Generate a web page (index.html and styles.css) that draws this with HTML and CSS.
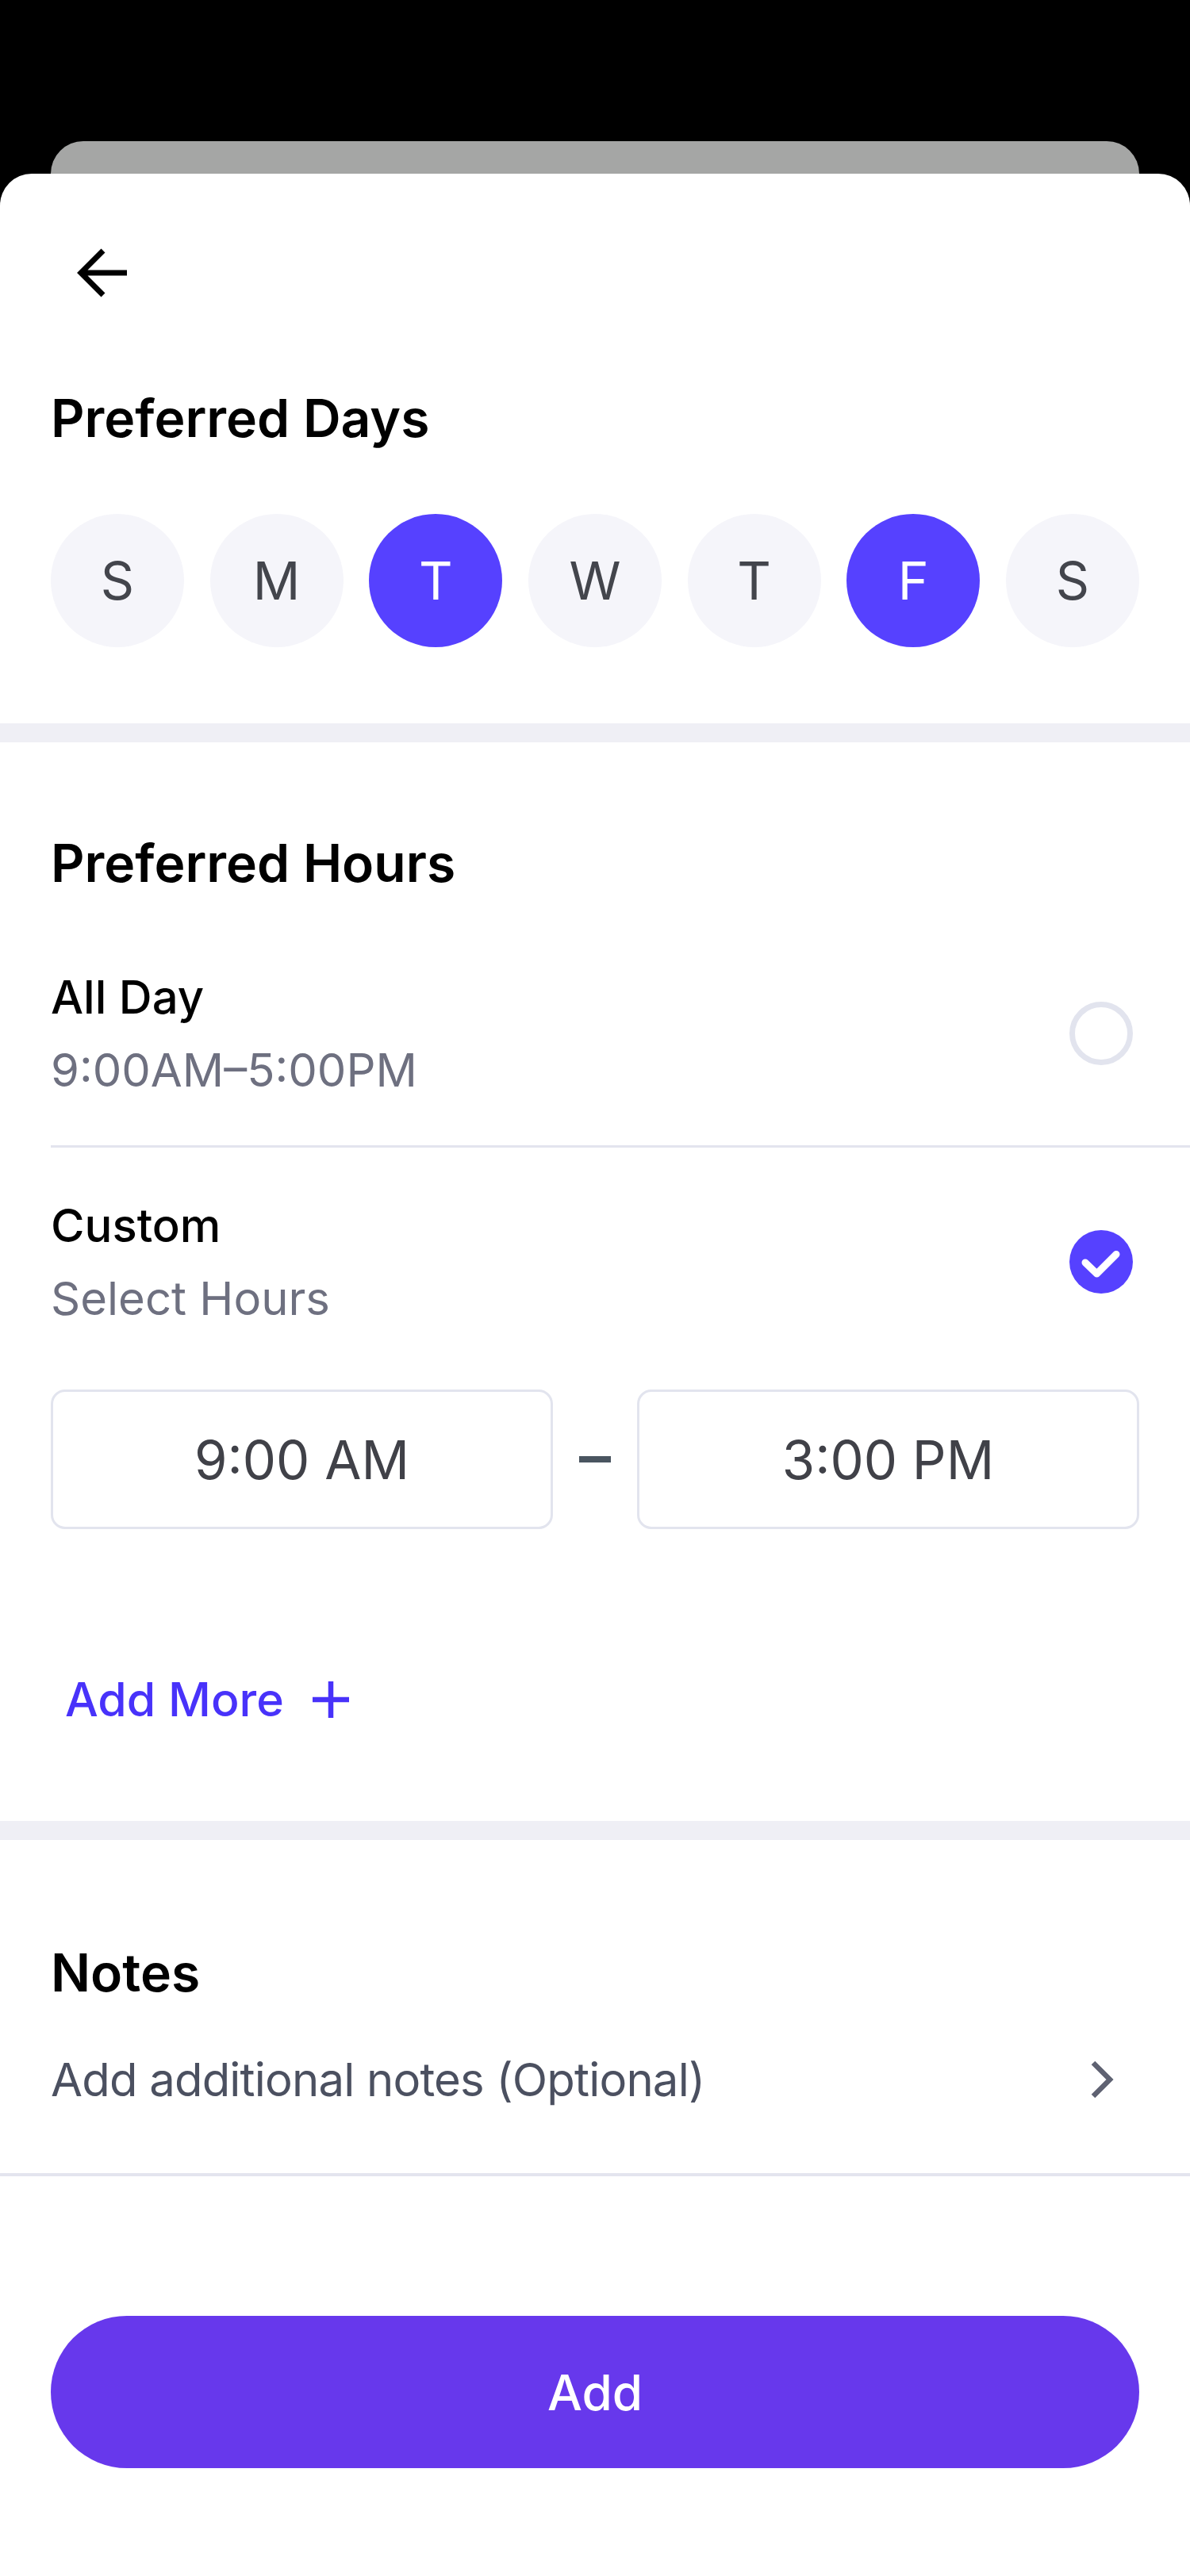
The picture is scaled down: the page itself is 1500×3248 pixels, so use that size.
FILE: index.html
```html
<!DOCTYPE html>
<html lang="en">
<head>
<meta charset="utf-8">
<title>Preferred Days</title>
<link rel="stylesheet" href="styles.css">
</head>
<body>
<div class="screen">
  <div class="backcard"></div>
  <div class="sheet">
    <div class="topbar">
      <svg class="back" width="64" height="64" viewBox="0 0 64 64" aria-hidden="true">
        <path d="M64 32 H6 M34 4 L6 32 L34 60" fill="none" stroke="#000" stroke-width="7"/>
      </svg>
    </div>

    <section class="block days-block">
      <h2 class="heading">Preferred Days</h2>
      <div class="days">
        <div class="day">S</div>
        <div class="day">M</div>
        <div class="day on">T</div>
        <div class="day">W</div>
        <div class="day">T</div>
        <div class="day on">F</div>
        <div class="day">S</div>
      </div>
    </section>

    <div class="band"></div>

    <section class="block hours-block">
      <h2 class="heading">Preferred Hours</h2>
      <div class="option first">
        <div class="texts">
          <div class="opt-title">All Day</div>
          <div class="opt-sub">9:00AM–5:00PM</div>
        </div>
        <div class="radio"></div>
      </div>
      <div class="option second">
        <div class="texts">
          <div class="opt-title">Custom</div>
          <div class="opt-sub">Select Hours</div>
        </div>
        <svg class="check" width="80" height="80" viewBox="0 0 80 80" aria-hidden="true">
          <circle cx="40" cy="40" r="40" fill="#5641FF"/>
          <path d="M20 41 L34.5 55 L59 30.5" fill="none" stroke="#fff" stroke-width="9" stroke-linecap="round" stroke-linejoin="round"/>
        </svg>
      </div>
      <div class="times">
        <div class="timebox">9:00 AM</div>
        <div class="dash"></div>
        <div class="timebox">3:00 PM</div>
      </div>
      <div class="addmore">
        <span>Add More</span>
        <svg width="46" height="46" viewBox="0 0 46 46" aria-hidden="true">
          <path d="M23 0 V46 M0 23 H46" fill="none" stroke="#4832FA" stroke-width="6.5"/>
        </svg>
      </div>
    </section>

    <div class="band"></div>

    <section class="notes-block">
      <h2 class="heading notes-heading">Notes</h2>
      <div class="notes-row">
        <span class="notes-text">Add additional notes (Optional)</span>
        <svg class="chev" width="32" height="48" viewBox="0 0 32 48" aria-hidden="true">
          <path d="M5 3 L26 24 L5 45" fill="none" stroke="#5F6272" stroke-width="6.5"/>
        </svg>
      </div>
    </section>

    <div class="footer">
      <button class="add-btn" type="button">Add</button>
    </div>
  </div>
</div>
</body>
</html>
```

FILE: styles.css
```css
* { box-sizing: border-box; }

html, body {
  margin: 0;
  padding: 0;
  background: #000;
}

body {
  width: 1500px;
  font-family: "Inter", "Noto Sans", "Liberation Sans", sans-serif;
  color: #000;
}

.screen {
  padding-top: 178px;
  background: #000;
}

.backcard {
  height: 41px;
  margin: 0 64px;
  background: #a5a6a5;
  border-radius: 42px 42px 0 0;
}

.sheet {
  background: #fff;
  border-radius: 40px 40px 0 0;
  min-height: 3029px;
}

.topbar {
  padding: 93px 0 0 96px;
  height: 157px;
}

.back { display: block; }

.heading {
  margin: 0;
  font-size: 66px;
  line-height: 80px;
  font-weight: 600;
  color: #000;
  padding-left: 64px;
}

.days-block {
  padding-top: 111px;
  padding-bottom: 96px;
}

.days {
  display: flex;
  justify-content: space-between;
  padding: 0 64px;
  margin-top: 81px;
}

.day {
  width: 168px;
  height: 168px;
  border-radius: 50%;
  background: #f5f5fa;
  color: #43454c;
  font-size: 66px;
  font-weight: 400;
  display: flex;
  align-items: center;
  justify-content: center;
}

.day.on {
  background: #5641ff;
  color: #fff;
}

.band {
  height: 24px;
  background: #efeff5;
}

.hours-block {
  padding-top: 112px;
  padding-bottom: 116px;
}

.option {
  display: flex;
  align-items: center;
  justify-content: space-between;
  margin-left: 64px;
  padding-right: 72px;
}

.option.first {
  padding-top: 94px;
  padding-bottom: 60px;
  border-bottom: 3px solid #e3e4ee;
}

.option.second {
  padding-top: 63px;
}

.texts {
  display: flex;
  flex-direction: column;
  gap: 22px;
}

.opt-title {
  font-size: 58px;
  line-height: 70px;
  font-weight: 500;
  color: #000;
}

.opt-sub {
  font-size: 58px;
  line-height: 70px;
  font-weight: 400;
  color: #6e7080;
}

.radio {
  width: 80px;
  height: 80px;
  border-radius: 50%;
  border: 7px solid #e2e4ee;
}

.check { display: block; }

.times {
  display: flex;
  align-items: center;
  gap: 33px;
  margin: 80px 64px 0;
}

.timebox {
  flex: 1;
  height: 176px;
  border: 3px solid #e2e4ee;
  border-radius: 18px;
  display: flex;
  align-items: center;
  justify-content: center;
  font-size: 67px;
  font-weight: 400;
  color: #404148;
}

.dash {
  width: 40px;
  height: 8px;
  background: #4a5560;
}

.addmore {
  display: flex;
  align-items: center;
  gap: 36px;
  margin-top: 178px;
  padding-left: 82px;
  font-size: 59px;
  line-height: 74px;
  font-weight: 500;
  color: #4832fa;
}

.addmore svg { display: block; }

.notes-block {
  padding-top: 127px;
  padding-bottom: 83px;
  border-bottom: 4px solid #e3e4ee;
}

.notes-row {
  display: flex;
  align-items: center;
  justify-content: space-between;
  margin-top: 60px;
  padding-left: 64px;
  padding-right: 95px;
}

.notes-text {
  font-size: 58px;
  line-height: 70px;
  font-weight: 400;
  letter-spacing: -0.8px;
  color: #4b5060;
}

.chev { display: block; }

.footer {
  padding: 176px 64px 0;
}

.add-btn {
  display: flex;
  align-items: center;
  justify-content: center;
  width: 100%;
  height: 192px;
  border: 0;
  border-radius: 96px;
  background: #6738ec;
  color: #fff;
  font-family: inherit;
  font-size: 62px;
  font-weight: 500;
  padding: 0;
}
```
